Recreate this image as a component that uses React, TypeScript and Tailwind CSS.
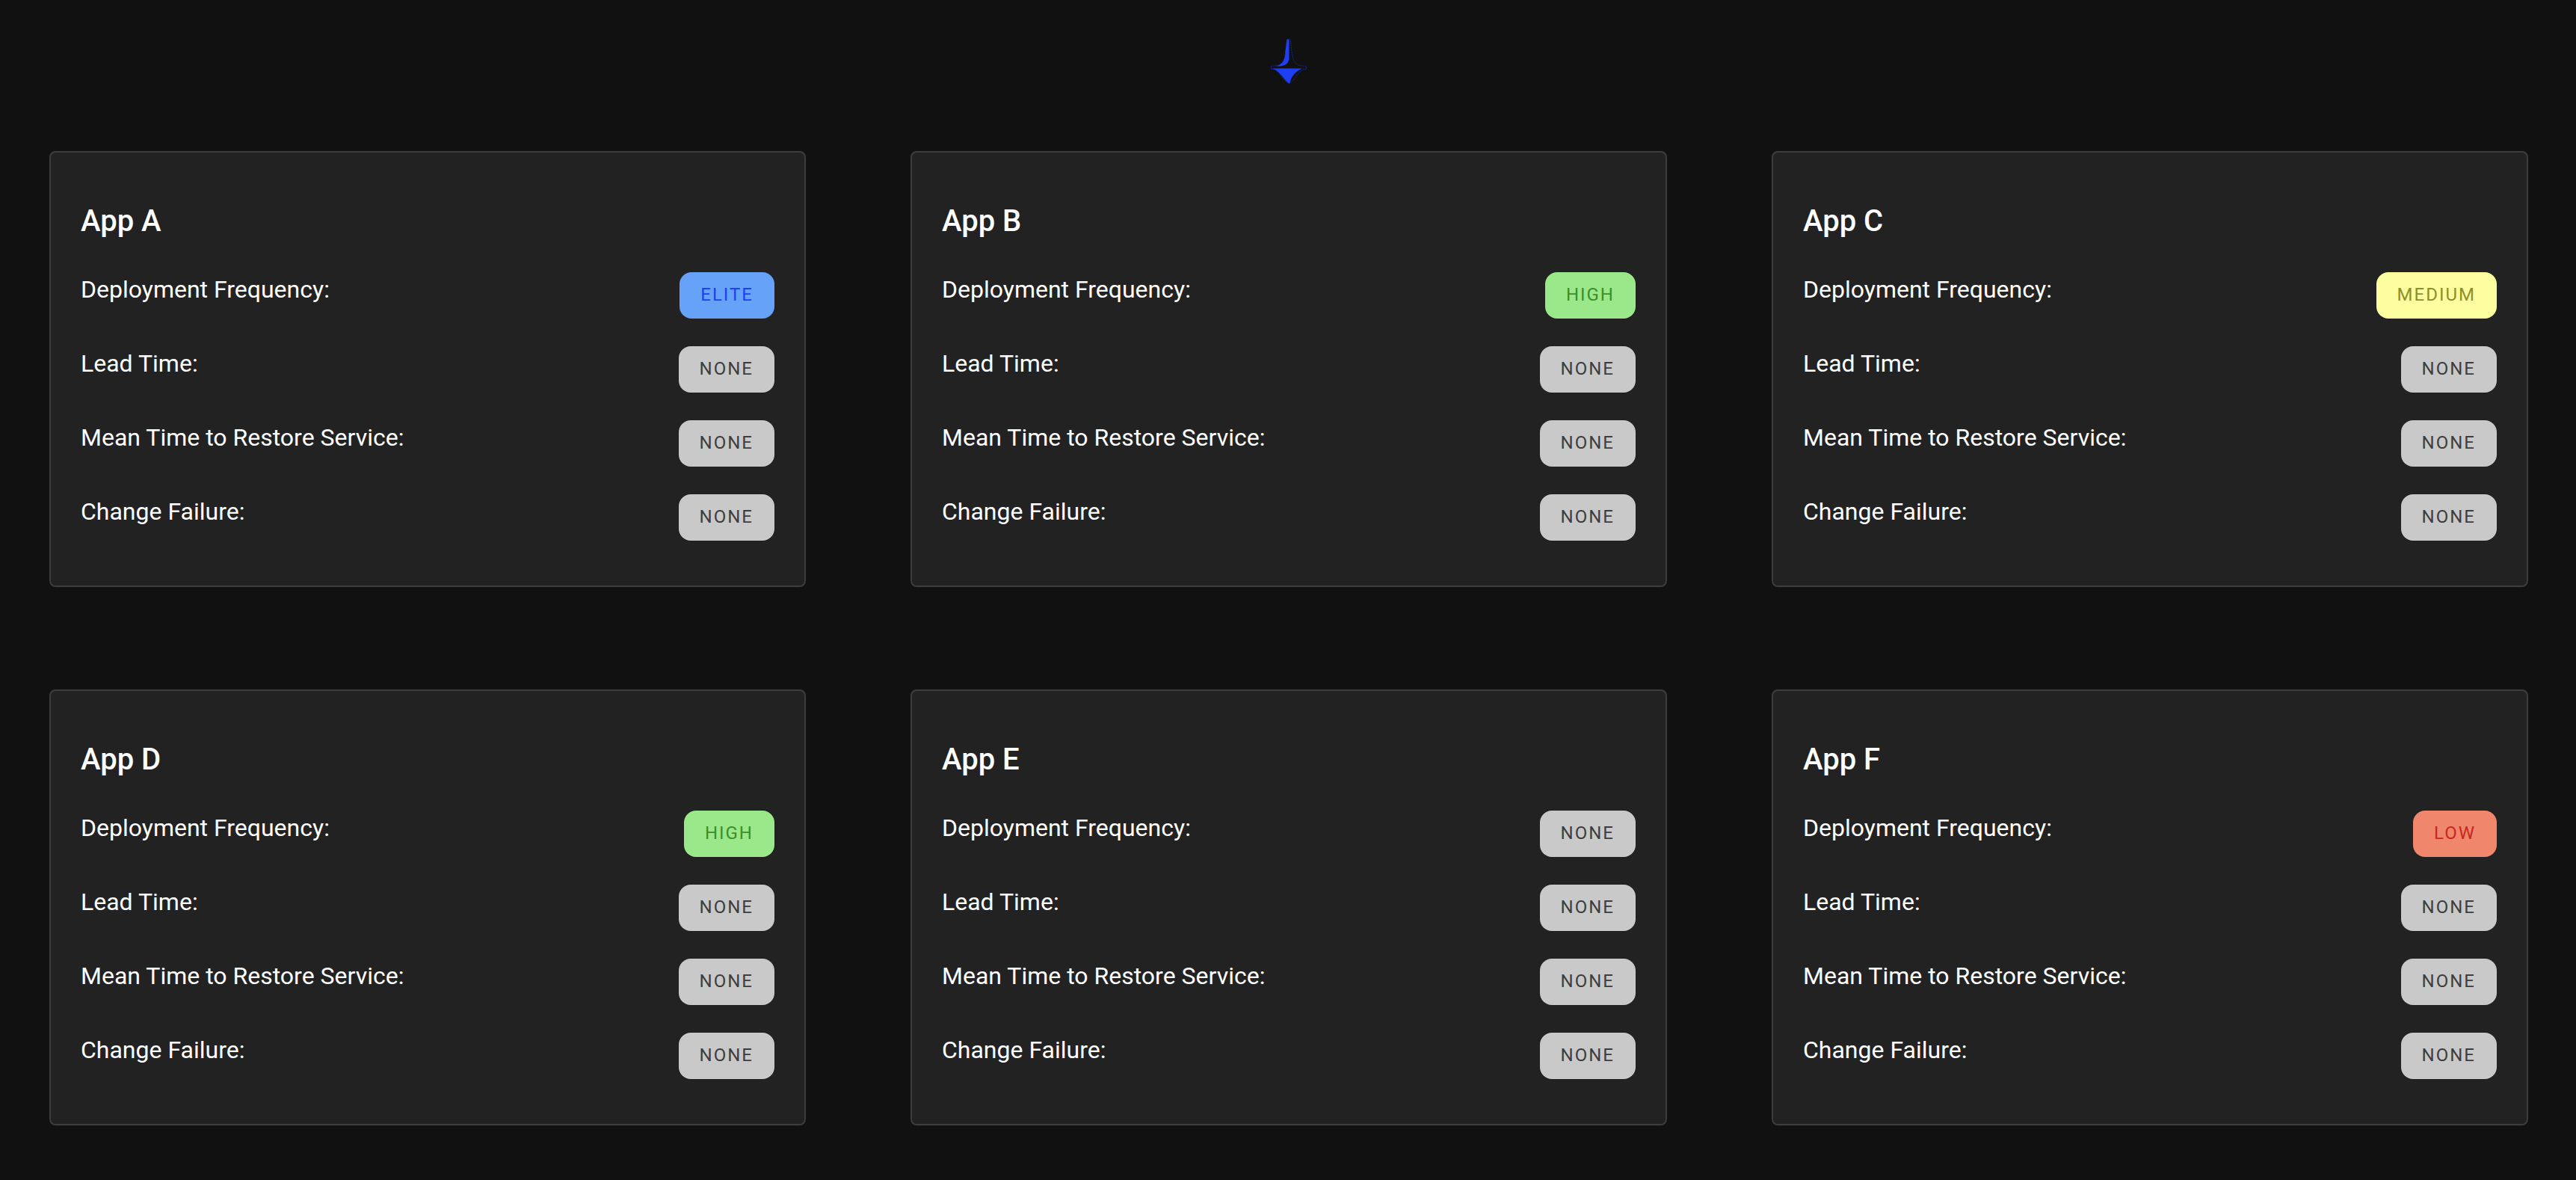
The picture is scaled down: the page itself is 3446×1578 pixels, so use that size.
type Rating = "Elite" | "High" | "Medium" | "Low" | "None";

const ratingStyles: Record<Rating, string> = {
  Elite: "bg-[#66a3f8] text-[#1f3ff5]",
  High: "bg-[#9ae889] text-[#3a8f27]",
  Medium: "bg-[#fcfea0] text-[#8e8e2c]",
  Low: "bg-[#f0876d] text-[#c8281f]",
  None: "bg-[#c9c9c9] text-[#3d3d3d]",
};

const metricNames = [
  "Deployment Frequency:",
  "Lead Time:",
  "Mean Time to Restore Service:",
  "Change Failure:",
];

const apps: { name: string; ratings: Rating[] }[] = [
  { name: "App A", ratings: ["Elite", "None", "None", "None"] },
  { name: "App B", ratings: ["High", "None", "None", "None"] },
  { name: "App C", ratings: ["Medium", "None", "None", "None"] },
  { name: "App D", ratings: ["High", "None", "None", "None"] },
  { name: "App E", ratings: ["None", "None", "None", "None"] },
  { name: "App F", ratings: ["Low", "None", "None", "None"] },
];

function Logo() {
  return (
    <svg viewBox="0 0 48 60" className="h-15 w-12" role="img" aria-label="Spinning top">
      <path
        d="M21.500 1 Q24 -0.3 26.500 1 C27.500 14 28 33 38 35.500 L47.500 36.500 V40.500 H44 C36 43 33 56 24 59.500 C15 56 13 43 4 40.500 H0.500 V36.500 L10 35.500 C20 33 20.500 14 21.500 1 Z"
        fill="#111111"
        stroke="#16299a"
        strokeWidth="1"
        strokeDasharray="2 1"
      />
      <path
        d="M21.500 1 Q23 0 24.500 1 V27 C23 34 18 37 7 36.500 C18 33 19 27 19.500 16 Z"
        fill="#1f3ff5"
      />
      <path d="M2 39.500 H42 C35 43 32 46 28.500 51 C26.500 54 26 59 24.500 59.800 C20 57 18 53 14 48.500 C10 44 7 41 2 39.500 Z" fill="#1f3ff5" />
    </svg>
  );
}

function AppCard({ name, ratings }: { name: string; ratings: Rating[] }) {
  return (
    <section className="rounded-lg border-2 border-[#3d3d3d] bg-[#222222] px-10 pt-[66px] pb-[60px]">
      <h2 className="text-[40px] leading-[52px] font-medium">{name}</h2>
      <dl className="mt-[42px] flex flex-col gap-[37px]">
        {metricNames.map((metric, i) => (
          <div key={metric} className="flex items-start justify-between">
            <dt className="text-[32px] leading-[46px]">{metric}</dt>
            <dd
              className={`rounded-2xl px-7 pt-[14px] pb-4 text-2xl leading-8 tracking-[2px] uppercase ${ratingStyles[ratings[i]]}`}
            >
              {ratings[i]}
            </dd>
          </div>
        ))}
      </dl>
    </section>
  );
}

export default function App() {
  return (
    <div className="min-h-screen bg-[#111111] pr-16 pb-[72px] pl-[66px] font-['Roboto',sans-serif] text-white">
      <header className="flex justify-center pt-[52px] pb-[90px]">
        <Logo />
      </header>
      <main className="grid grid-cols-3 gap-x-[140px] gap-y-[137px]">
        {apps.map((app) => (
          <AppCard key={app.name} {...app} />
        ))}
      </main>
    </div>
  );
}
